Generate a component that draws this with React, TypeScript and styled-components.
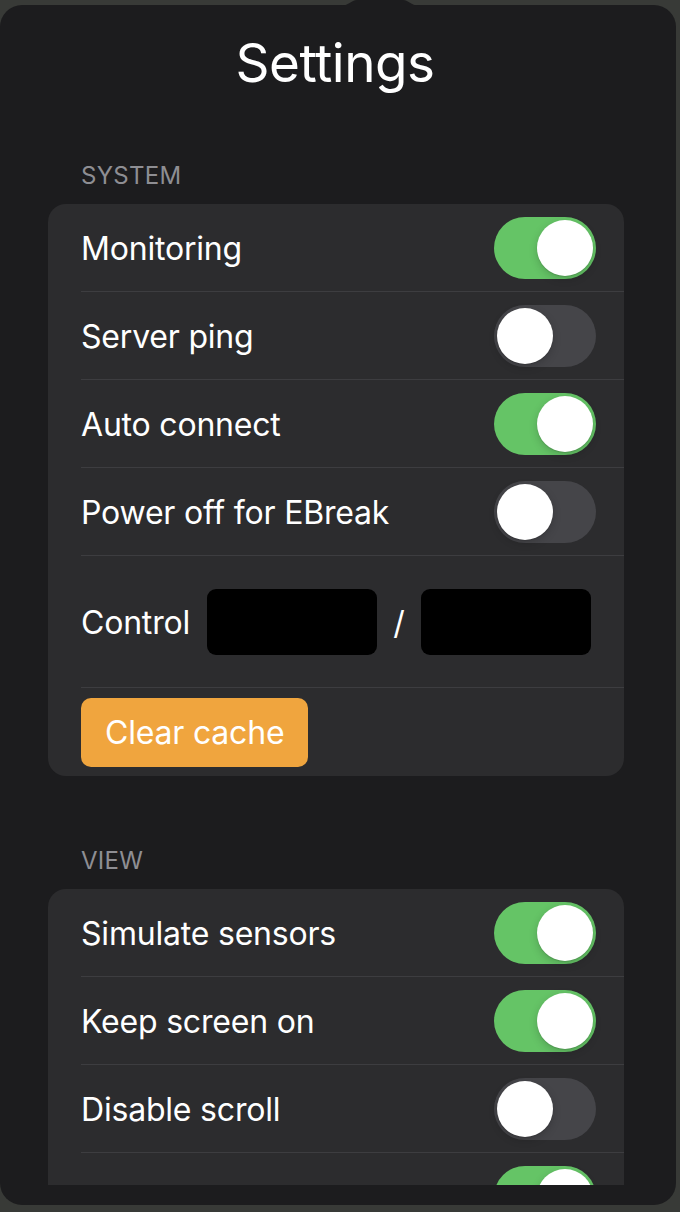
import React from 'react';
import styled, { createGlobalStyle, css } from 'styled-components';

const GlobalStyle = createGlobalStyle`
  html, body {
    margin: 0;
    padding: 0;
    background: #383a37;
  }
  body {
    font-family: Inter, "Liberation Sans", sans-serif;
    -webkit-font-smoothing: antialiased;
  }
`;

interface IToggleRow {
  label: string;
  on: boolean;
}

const systemRows: IToggleRow[] = [
  { label: 'Monitoring', on: true },
  { label: 'Server ping', on: false },
  { label: 'Auto connect', on: true },
  { label: 'Power off for EBreak', on: false },
];

const viewRows: IToggleRow[] = [
  { label: 'Simulate sensors', on: true },
  { label: 'Keep screen on', on: true },
  { label: 'Disable scroll', on: false },
  { label: 'Status bar', on: true },
];

const Toggle: React.FC<{ on: boolean }> = ({ on }) => (
  <StyledTrack on={on}>
    <StyledKnob on={on} />
  </StyledTrack>
);

const Arrow: React.FC = () => (
  <StyledArrow width="80" height="6" viewBox="0 0 80 6">
    <path d="M0 6 C9 6 11 0 17 0 L63 0 C69 0 71 6 80 6 Z" fill="#1c1c1e" />
  </StyledArrow>
);

const App: React.FC = () => (
  <>
    <GlobalStyle />
    <StyledScreen>
      <StyledPopover>
        <Arrow />
        <StyledScroll>
          <StyledTitle>Settings</StyledTitle>

          <StyledSectionHeader>System</StyledSectionHeader>
          <StyledCard>
            {systemRows.map(row => (
              <StyledRow key={row.label}>
                <StyledLabel>{row.label}</StyledLabel>
                <Toggle on={row.on} />
              </StyledRow>
            ))}
            <StyledControlRow>
              <StyledLabel>Control</StyledLabel>
              <StyledInput />
              <StyledSlash>/</StyledSlash>
              <StyledInput />
            </StyledControlRow>
            <StyledButtonRow>
              <StyledButton type="button">Clear cache</StyledButton>
            </StyledButtonRow>
          </StyledCard>

          <StyledSectionHeader>View</StyledSectionHeader>
          <StyledCard>
            {viewRows.map(row => (
              <StyledRow key={row.label}>
                <StyledLabel>{row.label}</StyledLabel>
                <Toggle on={row.on} />
              </StyledRow>
            ))}
          </StyledCard>
        </StyledScroll>
      </StyledPopover>
    </StyledScreen>
  </>
);
export default App;

const StyledScreen = styled.div`
  width: 680px;
  height: 1212px;
  padding-top: 5px;
  box-sizing: border-box;
  overflow: hidden;
`;

const StyledPopover = styled.div`
  position: relative;
  width: 676px;
  height: 1200px;
  border-radius: 22px;
  background: #1c1c1e;
  display: flex;
  flex-direction: column;
`;

const StyledArrow = styled.svg`
  position: absolute;
  top: -5px;
  left: 340px;
  display: block;
`;

const StyledScroll = styled.div`
  flex: 1;
  margin-bottom: 20px;
  overflow: hidden;
`;

const StyledTitle = styled.h1`
  margin: 0;
  padding: 26px 6px 0 0;
  font-size: 53px;
  line-height: 64px;
  font-weight: 400;
  color: #ffffff;
  text-align: center;
  letter-spacing: -0.5px;
`;

const StyledSectionHeader = styled.div`
  margin: 67px 0 14px;
  padding-left: 81px;
  font-size: 24px;
  line-height: 28px;
  color: #8e8e93;
  text-transform: uppercase;
  letter-spacing: 0.3px;
`;

const StyledCard = styled.div`
  margin: 0 52px 0 48px;
  background: #2c2c2e;
  border-radius: 18px;
  overflow: hidden;

  & + ${StyledSectionHeader} {
    margin-top: 71px;
  }
`;

const rowDivider = css`
  position: relative;

  &::after {
    content: '';
    position: absolute;
    left: 33px;
    right: 0;
    bottom: 0;
    height: 1px;
    background: #3d3d40;
  }
`;

const StyledRow = styled.div`
  ${rowDivider}
  height: 88px;
  padding: 0 28px 0 33px;
  display: flex;
  align-items: center;
  justify-content: space-between;

  &:last-child::after {
    display: none;
  }
`;

const StyledLabel = styled.span`
  font-size: 32px;
  color: #ffffff;
  letter-spacing: -0.2px;
  white-space: nowrap;
`;

interface IToggleProps {
  on: boolean;
}
const StyledTrack = styled.div<IToggleProps>`
  position: relative;
  flex-shrink: 0;
  width: 102px;
  height: 62px;
  border-radius: 31px;
  background: ${props => (props.on ? '#65c466' : '#454549')};
`;

const StyledKnob = styled.div<IToggleProps>`
  position: absolute;
  top: 3px;
  left: ${props => (props.on ? '43px' : '3px')};
  width: 56px;
  height: 56px;
  border-radius: 50%;
  background: #ffffff;
  box-shadow: 0 3px 8px rgba(0, 0, 0, 0.18), 0 1px 1px rgba(0, 0, 0, 0.12);
`;

const StyledControlRow = styled.div`
  ${rowDivider}
  height: 132px;
  padding: 0 33px;
  display: flex;
  align-items: center;

  & > ${StyledLabel} {
    margin-right: 17px;
  }
`;

const StyledInput = styled.div`
  width: 170px;
  height: 66px;
  border-radius: 9px;
  background: #000000;
`;

const StyledSlash = styled.span`
  width: 44px;
  text-align: center;
  font-size: 32px;
  color: #ffffff;
`;

const StyledButtonRow = styled.div`
  padding: 10px 33px 9px;
  display: flex;
`;

const StyledButton = styled.button`
  height: 69px;
  padding: 0 24px;
  border: none;
  border-radius: 10px;
  background: #f0a53e;
  color: #ffffff;
  font-family: inherit;
  font-size: 32px;
  letter-spacing: -0.2px;
  cursor: pointer;
`;
